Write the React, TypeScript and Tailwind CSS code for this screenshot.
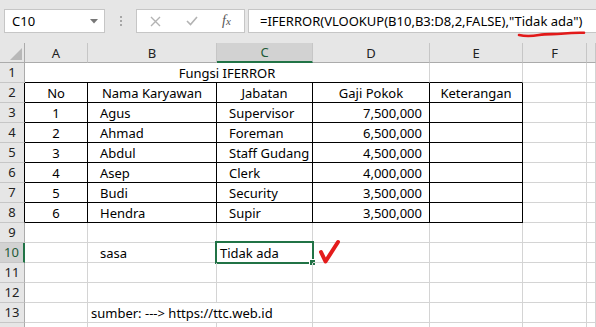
const COLS = ["A", "B", "C", "D", "E", "F", ""];

type Cell = { text?: string; align?: "left" | "center" | "right" | "indent"; span?: number };

const people = [
  ["1", "Agus", "Supervisor", "7,500,000"],
  ["2", "Ahmad", "Foreman", "6,500,000"],
  ["3", "Abdul", "Staff Gudang", "4,500,000"],
  ["4", "Asep", "Clerk", "4,000,000"],
  ["5", "Budi", "Security", "3,500,000"],
  ["6", "Hendra", "Supir", "3,500,000"],
];

function rowCells(r: number): Cell[] {
  if (r === 1) return [{ text: "Fungsi IFERROR", align: "center", span: 4 }, {}, {}, {}];
  if (r === 2)
    return [
      { text: "No", align: "center" },
      { text: "Nama Karyawan", align: "center" },
      { text: "Jabatan", align: "center" },
      { text: "Gaji Pokok", align: "center" },
      { text: "Keterangan", align: "center" },
      {},
      {},
    ];
  if (r >= 3 && r <= 8) {
    const p = people[r - 3];
    return [
      { text: p[0], align: "center" },
      { text: p[1], align: "indent" },
      { text: p[2], align: "indent" },
      { text: p[3], align: "right" },
      {},
      {},
      {},
    ];
  }
  if (r === 10) return [{}, { text: "sasa", align: "indent" }, { text: "Tidak ada" }, {}, {}, {}, {}];
  if (r === 13) return [{}, { text: "sumber: ---> https://ttc.web.id", span: 2 }, {}, {}, {}, {}];
  return [{}, {}, {}, {}, {}, {}, {}];
}

const alignClass = {
  left: "justify-start pl-[3px]",
  indent: "justify-start pl-[12px]",
  center: "justify-center",
  right: "justify-end pr-[7px]",
};

export default function App() {
  const rows = Array.from({ length: 14 }, (_, i) => i + 1);

  return (
    <div className="w-[596px] h-[327px] overflow-hidden bg-white font-['Noto_Sans',sans-serif] text-[13px] text-black">
      {/* formula bar */}
      <div className="relative h-[43px] bg-[#e6e6e6] flex items-start pt-[9px]">
        <div className="ml-[4px] w-[101px] h-[24px] bg-white border border-[#c6c6c6] flex items-center justify-between pl-[7px] pr-[6px]">
          <span className="leading-none">C10</span>
          <svg width="8" height="5" viewBox="0 0 8 5">
            <path d="M0 0 L8 0 L4 4.5 Z" fill="#777" />
          </svg>
        </div>
        <div className="w-[31px] h-[24px] flex flex-col items-center justify-center gap-[2px]">
          <span className="w-[2px] h-[2px] bg-[#a6a6a6]" />
          <span className="w-[2px] h-[2px] bg-[#a6a6a6]" />
          <span className="w-[2px] h-[2px] bg-[#a6a6a6]" />
        </div>
        <div className="w-[109px] h-[24px] bg-white border border-[#c6c6c6] flex items-center">
          <svg className="ml-[13px]" width="11" height="11" viewBox="0 0 11 11">
            <path d="M1 1 L10 10 M10 1 L1 10" stroke="#b3b3b3" strokeWidth="1.4" />
          </svg>
          <svg className="ml-[25px]" width="12" height="10" viewBox="0 0 12 10">
            <path d="M1 5 L4.5 8.5 L11 1" stroke="#b3b3b3" strokeWidth="1.6" fill="none" />
          </svg>
          <span className="ml-[24px] font-['Liberation_Serif',serif] italic text-[14px] leading-none text-[#555]">
            f<span className="text-[11px]">x</span>
          </span>
        </div>
        <div className="ml-[3px] flex-1 h-[24px] bg-white border border-r-0 border-[#c6c6c6] flex items-center pl-[11px]">
          <span className="leading-none whitespace-nowrap">=IFERROR(VLOOKUP(B10,B3:D8,2,FALSE),"Tidak ada")</span>
        </div>
        <svg className="absolute left-[517px] top-[30px]" width="70" height="9" viewBox="0 0 70 9">
          <path
            d="M2 5 C 8 6.5, 14 6.5, 22 5 C 30 3.5, 36 4.5, 44 3.8 C 52 3, 60 2.5, 67 2.8"
            stroke="#e21a1a"
            strokeWidth="2.6"
            strokeLinecap="round"
            fill="none"
          />
        </svg>
      </div>

      {/* sheet */}
      <div className="grid grid-cols-[25px_63px_129px_96px_117px_93px_64px_1fr] auto-rows-[20px]">
        {/* column header */}
        <div className="relative bg-[#e6e6e6] border-r border-b border-[#ababab]">
          <svg className="absolute right-[2px] bottom-[2px]" width="12" height="12" viewBox="0 0 12 12">
            <path d="M12 0 L12 12 L0 12 Z" fill="#b8b8b8" />
          </svg>
        </div>
        {COLS.map((c) => (
          <div
            key={c || "G"}
            className={`flex items-center justify-center border-r border-[#c6c6c6] ${
              c === "C"
                ? "bg-[#d2d2d2] border-b-2 border-b-[#217346] text-[#1e5b38]"
                : "bg-[#e6e6e6] border-b border-b-[#ababab] text-[#222]"
            }`}
          >
            <span className="leading-none pt-[1px]">{c}</span>
          </div>
        ))}

        {rows.map((r) => {
          const inTable = r >= 2 && r <= 8;
          const cells = rowCells(r);
          let col = 0;
          return [
            <div
              key={`h${r}`}
              className={`flex items-center justify-center border-b border-b-[#c6c6c6] ${
                r === 10
                  ? "bg-[#d2d2d2] border-r-2 border-r-[#217346] text-[#1e5b38]"
                  : `bg-[#e6e6e6] border-r ${inTable ? "border-r-black" : "border-r-[#ababab]"} text-[#222]`
              }`}
            >
              {r < 14 && <span className="leading-none">{r}</span>}
            </div>,
            ...cells.map((cell, i) => {
              const start = col;
              const span = cell.span ?? 1;
              col += span;
              const end = col - 1;
              const blackB = (r === 1 && start <= 4) || (inTable && end <= 4);
              const blackR = inTable && end <= 4;
              const spanClass = span === 4 ? "col-span-4" : span === 2 ? "col-span-2" : "";
              return (
                <div
                  key={`${r}-${i}`}
                  className={`relative flex items-end whitespace-nowrap border-r border-b ${spanClass} ${
                    blackR ? "border-r-black" : "border-r-[#d4d4d4]"
                  } ${blackB ? "border-b-black" : "border-b-[#d4d4d4]"} ${
                    alignClass[cell.align ?? "left"]
                  }`}
                >
                  {cell.text && <span className="leading-[13px] pb-[2px]">{cell.text}</span>}
                  {r === 10 && start === 2 && (
                    <>
                      <div className="absolute left-[-2px] top-[-2px] right-[-2px] bottom-[-2px] border-2 border-[#217346]" />
                      <div className="absolute right-[-4px] bottom-[-4px] w-[5px] h-[5px] bg-[#217346] border border-white box-content" />
                    </>
                  )}
                  {r === 10 && start === 3 && (
                    <svg className="absolute left-[5px] top-[-4px]" width="24" height="26" viewBox="0 0 24 26">
                      <path
                        d="M3 13 L7.5 22.5 L20 3"
                        stroke="#e41b1b"
                        strokeWidth="4"
                        strokeLinecap="round"
                        strokeLinejoin="round"
                        fill="none"
                      />
                    </svg>
                  )}
                </div>
              );
            }),
          ];
        })}
      </div>
    </div>
  );
}
